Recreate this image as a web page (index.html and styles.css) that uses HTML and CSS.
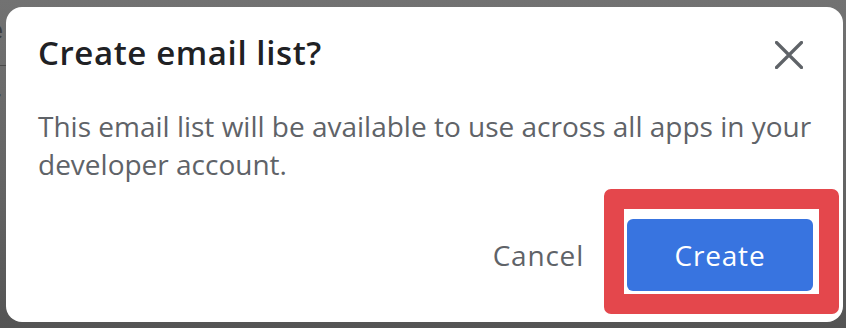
FILE: index.html
```html
<!DOCTYPE html>
<html lang="en">
<head>
<meta charset="utf-8">
<title>Create email list?</title>
<link rel="stylesheet" href="styles.css">
</head>
<body>
<div class="page">
  <div class="backdrop" aria-hidden="true">
    <span class="frag frag-e">e</span>
    <span class="frag-line"></span>
    <span class="frag frag-r">r</span>
  </div>
  <div class="dialog" role="dialog" aria-labelledby="dlg-title">
    <div class="header">
      <h1 id="dlg-title" class="title">Create email list?</h1>
      <button class="close" aria-label="Close">
        <svg width="28" height="28" viewBox="0 0 28 28" aria-hidden="true">
          <path d="M1.5 1.5 L26.5 26.5 M26.5 1.5 L1.5 26.5" stroke="#5f6368" stroke-width="3.2" stroke-linecap="round" fill="none"/>
        </svg>
      </button>
    </div>
    <p class="body">This email list will be available to use across all apps in your developer account.</p>
    <div class="footer">
      <button class="btn-text">Cancel</button>
      <span class="highlight"><button class="btn-primary">Create</button></span>
    </div>
  </div>
</div>
</body>
</html>
```
FILE: styles.css
```css
html, body {
  margin: 0;
  padding: 0;
}
body {
  width: 846px;
  height: 328px;
  overflow: hidden;
  background: linear-gradient(180deg, #727272 0%, #636363 60%, #545454 100%);
  font-family: "Open Sans", Roboto, "Liberation Sans", sans-serif;
}
.page {
  display: flex;
  padding-top: 7px;
  height: 315px;
}
.backdrop {
  width: 6px;
  flex: none;
  overflow: hidden;
  display: flex;
  flex-direction: column;
}
.frag {
  font-family: Roboto, "Liberation Sans", sans-serif;
  color: #3c3c3c;
  font-size: 26px;
  line-height: 30px;
  margin-left: -11px;
}
.frag-e {
  margin-top: 8px;
}
.frag-line {
  display: block;
  height: 1px;
  background: #4a4a4a;
  margin-top: 20px;
}
.frag-r {
  margin-top: 18px;
  margin-left: -8px;
}
.dialog {
  width: 837px;
  height: 315px;
  background: #ffffff;
  border-radius: 16px;
  box-sizing: border-box;
  padding: 26px 4px 8px 32px;
  display: flex;
  flex-direction: column;
}
.header {
  display: flex;
  align-items: center;
  justify-content: space-between;
  padding-right: 36px;
}
.title {
  margin: 0;
  font-family: "Open Sans", Roboto, sans-serif;
  font-weight: 600;
  font-size: 33px;
  line-height: 40px;
  color: #202124;
  letter-spacing: 0.6px;
}
.close {
  border: 0;
  background: none;
  padding: 0;
  margin-top: 4px;
  width: 28px;
  height: 28px;
  display: flex;
  cursor: pointer;
}
.body {
  margin: 34px 20px 0 0;
  font-size: 28px;
  line-height: 38px;
  color: #5f6368;
}
.footer {
  margin-top: auto;
  display: flex;
  justify-content: flex-end;
  align-items: center;
  gap: 20px;
}
.btn-text {
  border: 0;
  background: none;
  padding: 0;
  margin-top: 6px;
  font-family: "Open Sans", Roboto, sans-serif;
  font-size: 28px;
  letter-spacing: 0.8px;
  color: #5f6368;
  cursor: pointer;
}
.highlight {
  display: flex;
  border: 20px solid #e4474c;
  border-radius: 7px;
  padding: 10px 6px 3px 3px;
  background: #ffffff;
}
.btn-primary {
  width: 186px;
  height: 72px;
  border: 0;
  border-radius: 6px;
  background: #3874e0;
  color: #ffffff;
  font-family: "Open Sans", Roboto, sans-serif;
  font-size: 28px;
  letter-spacing: 0.8px;
  cursor: pointer;
}
```
